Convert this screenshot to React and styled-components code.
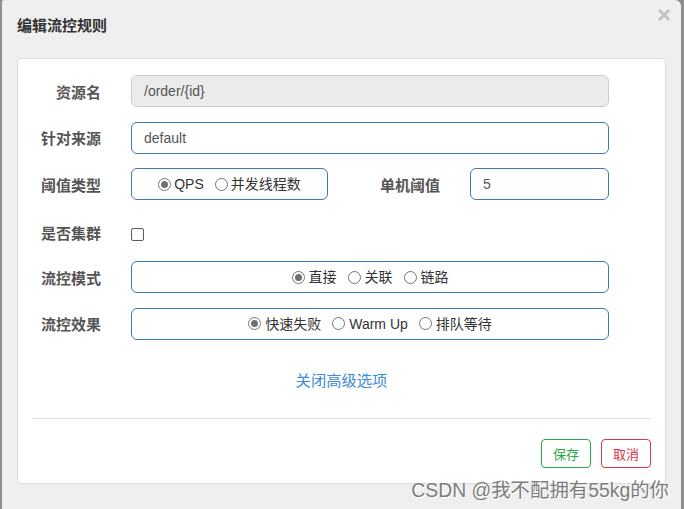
import React from "react";
import styled, { createGlobalStyle } from "styled-components";

const GlobalStyle = createGlobalStyle`
  html, body { margin: 0; padding: 0; }
  body {
    background: #8e8e8e;
    width: 684px;
    height: 509px;
    overflow: hidden;
    font-family: "Liberation Sans", "Noto Sans CJK SC", sans-serif;
  }
`;

const Dialog = styled.div`
  position: relative;
  margin-left: 2px;
  width: 679px;
  height: 509px;
  background: #efefef;
  border-radius: 2px 6px 0 0;
  box-sizing: border-box;
  overflow: hidden;
`;

const Header = styled.div`
  display: flex;
  justify-content: space-between;
  align-items: center;
  height: 52px;
  padding: 0 10px 0 15px;
  margin-bottom: 6px;
`;

const Title = styled.h4`
  margin: 0;
  font-size: 15px;
  font-weight: bold;
  color: #333;
  line-height: 20px;
`;

const Close = styled.span`
  align-self: flex-start;
  margin-top: 3px;
  font-family: "Liberation Sans", sans-serif;
  font-size: 24px;
  font-weight: bold;
  line-height: 24px;
  color: #c2c2c2;
`;

const Panel = styled.div`
  margin: 0 15px 0 15px;
  background: #fff;
  border: 1px solid #dcdcdc;
  border-radius: 4px;
  padding: 16px 0 15px 0;
`;

const Form = styled.div`
  display: grid;
  grid-template-columns: 83px 478px;
  column-gap: 30px;
  row-gap: 14.6px;
`;

const Label = styled.label`
  display: flex;
  align-items: center;
  justify-content: flex-end;
  box-sizing: border-box;
  height: 32px;
  padding-top: ${(p) => p.$offset || "0px"};
  font-size: 15px;
  font-weight: bold;
  color: #555;
  white-space: nowrap;
`;

const Input = styled.div`
  box-sizing: border-box;
  height: 32px;
  width: ${(p) => p.$width || "100%"};
  display: flex;
  align-items: center;
  padding: 0 12px;
  border: 1px solid ${(p) => (p.$disabled ? "#cccccc" : "#3a79b9")};
  background: ${(p) => (p.$disabled ? "#ebebeb" : "#fff")};
  border-radius: 6px;
  font-size: 14px;
  color: #555;
`;

const SplitRow = styled.div`
  display: flex;
  align-items: center;
  height: 32px;
`;

const SubLabel = styled(Label)`
  flex: 1;
  padding-right: 30px;
`;

const RadioBox = styled.div`
  box-sizing: border-box;
  height: 32px;
  width: ${(p) => p.$width || "100%"};
  display: flex;
  align-items: center;
  justify-content: center;
  gap: 11px;
  border: 1px solid #3a79b9;
  border-radius: 6px;
  background: #fff;
`;

const RadioItem = styled.span`
  display: inline-flex;
  align-items: center;
  gap: ${(p) => p.$gap || "4px"};
  font-size: 14px;
  color: #333;
  line-height: 18px;
`;

const Circle = styled.span`
  box-sizing: border-box;
  width: 13px;
  height: 13px;
  border-radius: 50%;
  border: 1px solid #767676;
  background: #fff;
  display: inline-flex;
  align-items: center;
  justify-content: center;
  &::after {
    content: "";
    display: ${(p) => (p.$checked ? "block" : "none")};
    width: 7px;
    height: 7px;
    border-radius: 50%;
    background: #707070;
  }
`;

const CheckCell = styled.div`
  height: 32px;
  display: flex;
  align-items: flex-start;
  padding-top: 13px;
  box-sizing: border-box;
`;

const Checkbox = styled.span`
  box-sizing: border-box;
  width: 13px;
  height: 13px;
  border: 1px solid #5a5a5a;
  border-radius: 2px;
  background: #fff;
`;

const AdvancedLink = styled.a`
  display: block;
  margin-top: 31px;
  text-align: center;
  font-size: 15.3px;
  line-height: 20px;
  color: #3d8bd4;
  cursor: pointer;
`;

const Divider = styled.hr`
  margin: 27px 14px 0 14px;
  border: 0;
  border-top: 1px solid #e2e2e2;
  height: 0;
`;

const Footer = styled.div`
  display: flex;
  justify-content: flex-end;
  gap: 10px;
  margin-top: 20px;
  padding-right: 14px;
`;

const Button = styled.button`
  box-sizing: border-box;
  width: 50px;
  height: 29px;
  padding: 0;
  background: #fff;
  border: 1px solid ${(p) => p.$color};
  color: ${(p) => p.$color};
  border-radius: 4px;
  font-family: "Liberation Sans", "Noto Sans CJK SC", sans-serif;
  font-size: 13px;
`;

const Watermark = styled.div`
  position: absolute;
  right: 12px;
  top: 478px;
  font-size: 19.4px;
  line-height: 24px;
  color: #7c7c7c;
  text-shadow: 0 0 1px #fff, 1px 1px 0 #fff;
  white-space: nowrap;
`;

const Radio = ({ checked, gap, children }) => (
  <RadioItem $gap={gap}>
    <Circle $checked={checked} />
    {children}
  </RadioItem>
);

export default function App() {
  return (
    <>
      <GlobalStyle />
      <Dialog>
        <Header>
          <Title>编辑流控规则</Title>
          <Close>×</Close>
        </Header>
        <Panel>
          <Form>
            <Label>资源名</Label>
            <Input $disabled>/order/{"{id}"}</Input>

            <Label>针对来源</Label>
            <Input>default</Input>

            <Label>阈值类型</Label>
            <SplitRow>
              <RadioBox $width="197px">
                <Radio checked gap="3px">QPS</Radio>
                <Radio gap="3px">并发线程数</Radio>
              </RadioBox>
              <SubLabel>单机阈值</SubLabel>
              <Input $width="139px">5</Input>
            </SplitRow>

            <Label $offset="4px">是否集群</Label>
            <CheckCell>
              <Checkbox />
            </CheckCell>

            <Label>流控模式</Label>
            <RadioBox>
              <Radio checked>直接</Radio>
              <Radio>关联</Radio>
              <Radio>链路</Radio>
            </RadioBox>

            <Label>流控效果</Label>
            <RadioBox>
              <Radio checked>快速失败</Radio>
              <Radio>Warm Up</Radio>
              <Radio>排队等待</Radio>
            </RadioBox>
          </Form>
          <AdvancedLink>关闭高级选项</AdvancedLink>
          <Divider />
          <Footer>
            <Button $color="#28a745">保存</Button>
            <Button $color="#dc3545">取消</Button>
          </Footer>
        </Panel>
        <Watermark>CSDN @我不配拥有55kg的你</Watermark>
      </Dialog>
    </>
  );
}
